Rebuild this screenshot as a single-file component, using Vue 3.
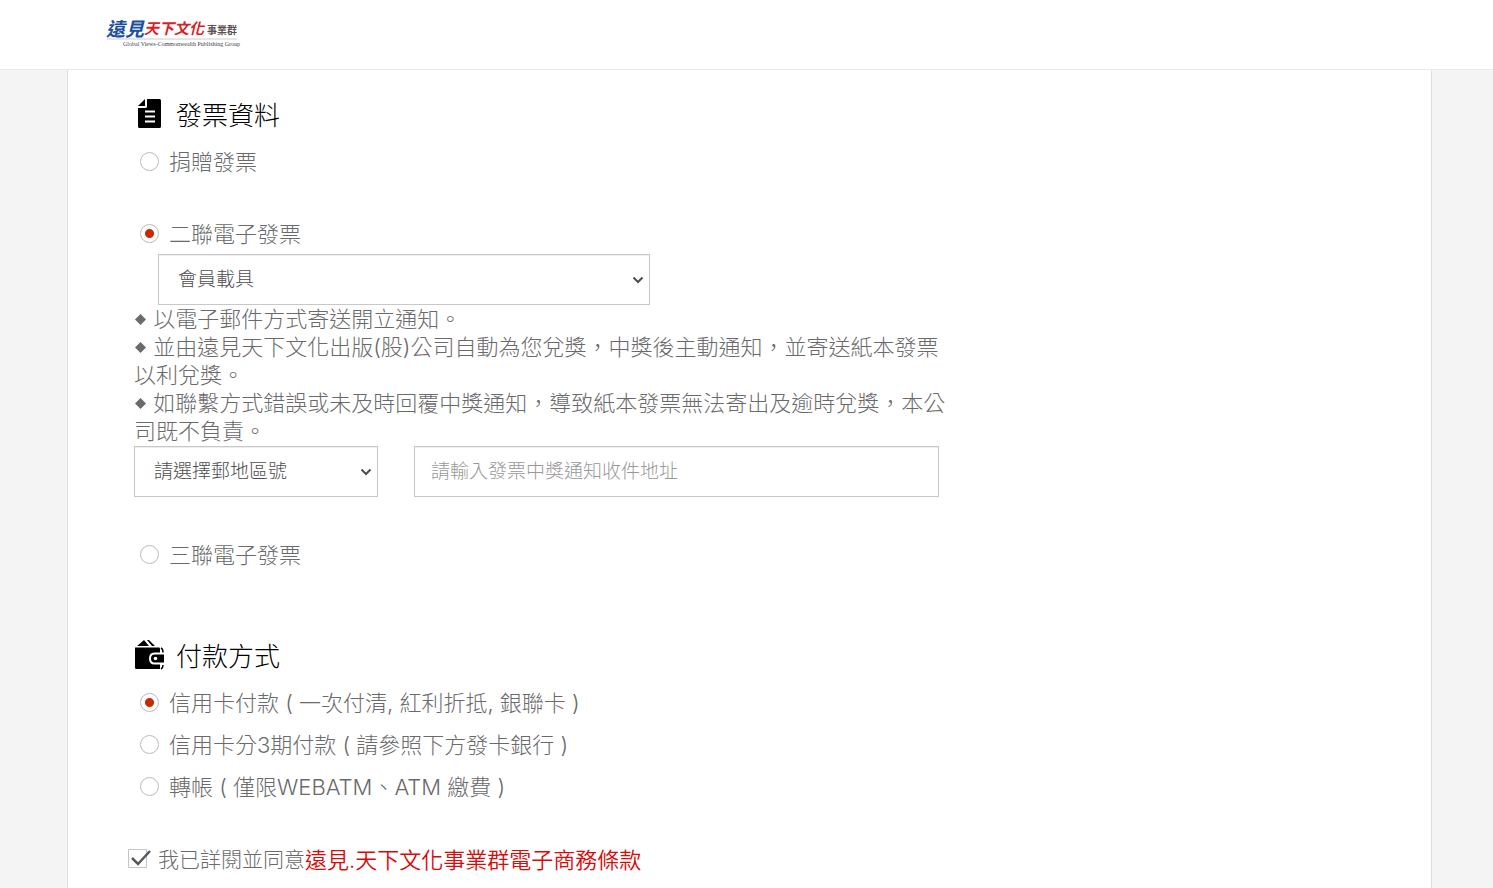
<template>
  <div class="page">
    <header class="site-header">
      <a href="#" class="brand" aria-label="遠見天下文化事業群">
        <svg class="logo" width="140" height="36" viewBox="0 0 140 36">
          <path d="M2 25H132" stroke="#dcdcdc" stroke-width="1.5" />
          <text class="brush" x="1" y="22" font-size="19" fill="#1b4fa0">遠見</text>
          <text class="brush" x="39" y="20" font-size="15" fill="#dc1e28">天下文化</text>
          <text class="group" x="102" y="20" font-size="10" fill="#5a5050">事業群</text>
          <text class="english" x="18" y="32" font-size="6" fill="#444">Global Views-Commonwealth Publishing Group</text>
        </svg>
      </a>
    </header>

    <main class="sheet">
      <form class="form" @submit.prevent>
        <section>
          <h2 class="title">
            <svg class="title-icon" width="30" height="30" viewBox="0 0 30 30">
              <path d="M13 0H25.500Q27 0 27 1.500V27.500Q27 29 25.500 29H5.500Q4 29 4 27.500V9H11.500Q13 9 13 7.500Z" />
              <path d="M11 0V7H4Z" />
              <path d="M11 12.500H21M11 17.500H21M11 22.500H21" stroke="#fff" stroke-width="2" />
            </svg>
            發票資料
          </h2>

          <label class="choice">
            <input v-model="invoice" type="radio" name="invoice" value="donate" />
            捐贈發票
          </label>

          <label class="choice spaced">
            <input v-model="invoice" type="radio" name="invoice" value="personal" />
            二聯電子發票
          </label>
          <select v-model="carrier" class="field select carrier" aria-label="載具">
            <option>會員載具</option>
          </select>
          <div class="notes">
            <p v-for="note in notes" :key="note" class="note">
              <svg class="diamond" width="11" height="11" viewBox="0 0 11 11"><path d="M5.500 0L11 5.500L5.500 11L0 5.500Z" /></svg>
              {{ note }}
            </p>
          </div>
          <div class="address">
            <select v-model="zip" class="field select zip" aria-label="郵地區號">
              <option>請選擇郵地區號</option>
            </select>
            <input v-model="address" class="field street" type="text" placeholder="請輸入發票中獎通知收件地址" aria-label="收件地址" />
          </div>

          <label class="choice company">
            <input v-model="invoice" type="radio" name="invoice" value="company" />
            三聯電子發票
          </label>
        </section>

        <section class="payment">
          <h2 class="title">
            <svg class="title-icon" width="30" height="30" viewBox="0 0 30 30">
              <path d="M3 6L10 0L15 6ZM13 0H15L21 6H18Z" />
              <path d="M1 7.500H25Q26 7.500 26 8.500V29H2.500Q1 29 1 27.500Z" />
              <path d="M30 13.500H20.500Q16 13.500 16 18.500T20.500 23.500H30" fill="#000" stroke="#fff" stroke-width="2" />
              <circle cx="21.500" cy="18.500" r="1.800" fill="#fff" />
              <path d="M27 8Q29 9 29 12.500M27 29Q29 28 29 25" fill="none" stroke="#000" stroke-width="1.500" />
            </svg>
            付款方式
          </h2>
          <div class="methods">
            <label v-for="method in methods" :key="method.value" class="choice">
              <input v-model="payment" type="radio" name="payment" :value="method.value" />
              {{ method.label }}
            </label>
          </div>
        </section>

        <div class="agree">
          <input id="agree" v-model="agreed" type="checkbox" class="agree-input" />
          <label for="agree" class="agree-label">
            <svg class="tick" width="24" height="20" viewBox="0 0 24 20">
              <path d="M.5 1.500H18.500V19.500H.5Z" fill="#fff" stroke="#c4c4c4" />
              <path v-if="agreed" d="M4 10L10 16L22 3" fill="none" stroke="#58595b" stroke-width="2.500" />
            </svg>
            我已詳閱並同意</label><a href="#" class="terms">遠見.天下文化事業群電子商務條款</a>
        </div>
      </form>
    </main>
  </div>
</template>

<script setup>
import { ref } from 'vue';

const invoice = ref('personal');
const carrier = ref('會員載具');
const zip = ref('請選擇郵地區號');
const address = ref('');
const payment = ref('credit');
const agreed = ref(true);

const notes = [
  '以電子郵件方式寄送開立通知。',
  '並由遠見天下文化出版(股)公司自動為您兌獎，中獎後主動通知，並寄送紙本發票以利兌獎。',
  '如聯繫方式錯誤或未及時回覆中獎通知，導致紙本發票無法寄出及逾時兌獎，本公司既不負責。'
];

const methods = [
  { value: 'credit', label: '信用卡付款 ( 一次付清, 紅利折抵, 銀聯卡 )' },
  { value: 'installment', label: '信用卡分3期付款 ( 請參照下方發卡銀行 )' },
  { value: 'transfer', label: '轉帳 ( 僅限WEBATM、ATM 繳費 )' }
];
</script>

<style>
body {
  background: #f4f4f4;
}
</style>

<style scoped>
* {
  box-sizing: border-box;
}

.page {
  min-height: 100vh;
  display: flex;
  flex-direction: column;
  font-family: Inter, "Noto Sans CJK TC", sans-serif;
  font-weight: 300;
  font-size: 22px;
  line-height: 28px;
  color: #6a6a6c;
}

.site-header {
  height: 70px;
  padding: 14px 105px;
  background: #fff;
  border-bottom: 1px solid #ebebeb;
}

.brand,
.logo {
  display: block;
}

.brand {
  width: 140px;
}

.brush {
  font-weight: 700;
  font-style: italic;
}

.group {
  font-weight: 700;
}

.english {
  font-family: "Liberation Serif", serif;
  font-weight: 400;
}

.sheet {
  flex: 1;
  margin: 0 61px 0 67px;
  padding: 23px 66px 9px;
  background: #fff;
  border: 1px solid #dedede;
  border-width: 0 1px;
}

.form {
  max-width: 805px;
}

.title {
  display: flex;
  align-items: center;
  gap: 12px;
  height: 42px;
  margin: 0 0 6px;
  padding-top: 4px;
  font-size: 26px;
  font-weight: 300;
  color: #000;
}

.title-icon {
  flex: none;
  margin-bottom: 4px;
}

.choice {
  display: flex;
  align-items: center;
  gap: 10px;
  width: fit-content;
  height: 40px;
  padding: 2px 0 0 6px;
}

.choice input {
  appearance: none;
  flex: none;
  width: 19px;
  height: 19px;
  margin: 0 0 2px;
  border: 1px solid #bbb;
  border-radius: 50%;
  background: #fff;
}

.choice input:checked {
  background: radial-gradient(circle, #c92800 4px, #fff 5px);
}

.spaced {
  margin-top: 32px;
}

.field {
  height: 51px;
  margin: 0;
  border: 1px solid #c8c8c8;
  border-radius: 0;
  background: #fff;
  box-shadow: inset 0 1px 1px rgba(0, 0, 0, 0.08);
  font: inherit;
  font-size: 19px;
  color: #4d4d4f;
}

.select {
  appearance: none;
  padding: 0 24px 0 19px;
  background: #fff url("data:image/svg+xml,%3Csvg xmlns='http://www.w3.org/2000/svg' width='12' height='8'%3E%3Cpath d='M1.500 1.500L6 6L10.500 1.500' fill='none' stroke='%234d4d4f' stroke-width='2'/%3E%3C/svg%3E") no-repeat right 5px center;
}

.carrier {
  display: block;
  width: 492px;
  margin: 1px 0 0 24px;
}

/* the notes run slightly wider than the fields below them */
.notes {
  margin: 0 -12px 0 0;
}

.note {
  margin: 0;
}

.diamond {
  margin: 0 1px 2px 1px;
  fill: #6a6a6c;
}

.address {
  display: flex;
  gap: 36px;
  margin-top: 1px;
}

.zip {
  flex: none;
  width: 244px;
}

.street {
  flex: 1;
  min-width: 0;
  padding: 0 16px;
}

.street::placeholder {
  color: #999;
}

.company {
  margin-top: 37px;
}

.payment {
  margin-top: 60px;
}

.methods {
  display: grid;
  gap: 2px;
}

.agree {
  position: relative;
  display: flex;
  align-items: center;
  height: 40px;
  margin: 32px 0 0 -6px;
  padding-top: 4px;
}

.agree-input {
  position: absolute;
  width: 19px;
  height: 19px;
  margin: 0;
  opacity: 0;
}

.agree-label {
  display: flex;
  align-items: center;
  gap: 6px;
  font-size: 21px;
}

.tick {
  margin-bottom: 4px;
}

.terms {
  color: #d90a0a;
  font-weight: 350;
  text-decoration: none;
}
</style>
